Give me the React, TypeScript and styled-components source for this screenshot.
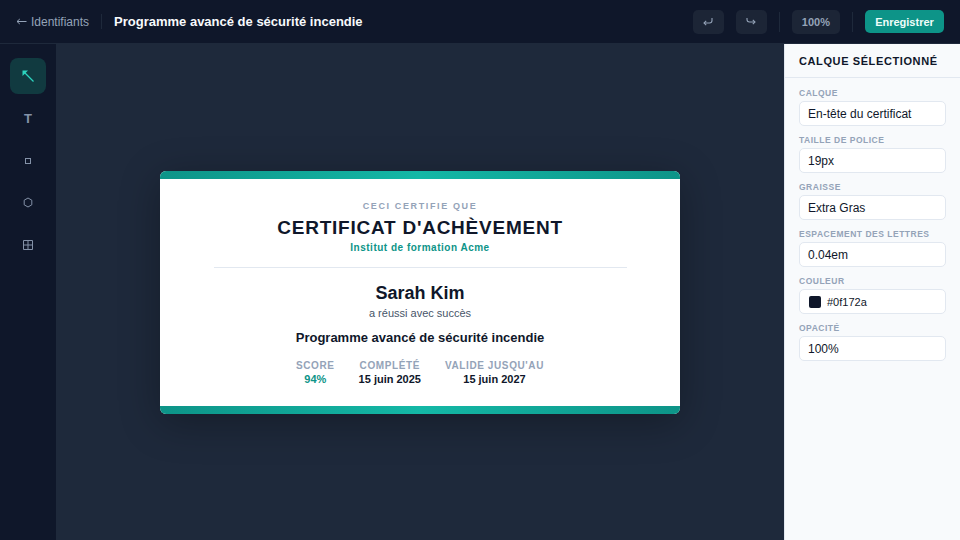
import styled, { createGlobalStyle } from 'styled-components'

const GlobalStyle = createGlobalStyle`
  html, body {
    margin: 0;
    padding: 0;
    background: #1e293b;
  }
  * {
    box-sizing: border-box;
  }
`

const Page = styled.div`
  width: 960px;
  height: 540px;
  display: flex;
  flex-direction: column;
  overflow: hidden;
  font-family: 'Liberation Sans', Arial, sans-serif;
  background: #1e293b;
`

const TopBar = styled.header`
  height: 44px;
  flex-shrink: 0;
  display: flex;
  align-items: center;
  padding: 0 16px;
  background: #0f172a;
  border-bottom: 1px solid #1e293b;
`

const BackLink = styled.a`
  display: flex;
  align-items: center;
  gap: 4px;
  color: #94a3b8;
  font-size: 12px;
  white-space: nowrap;
`

const Divider = styled.div`
  width: 1px;
  height: 15px;
  margin: 0 12px;
  background: #1e293b;
`

const DocTitle = styled.div`
  flex: 1;
  color: #f8fafc;
  font-size: 13px;
  font-weight: 700;
`

const Actions = styled.div`
  display: flex;
  align-items: center;
  gap: 12px;
`

const GhostButton = styled.button`
  height: 24px;
  min-width: 31px;
  padding: 0 10px;
  display: flex;
  align-items: center;
  justify-content: center;
  border: none;
  border-radius: 5px;
  background: #1c2536;
  color: #94a3b8;
  font-family: inherit;
  font-size: 11px;
  font-weight: 700;
`

const ActionDivider = styled.div`
  width: 1px;
  height: 20px;
  background: #1e293b;
`

const SaveButton = styled.button`
  height: 23px;
  width: 79px;
  padding: 0;
  border: none;
  border-radius: 5px;
  background: #0d9488;
  color: #f0fdfa;
  font-family: inherit;
  font-size: 11px;
  font-weight: 700;
`

const Body = styled.div`
  flex: 1;
  display: flex;
  min-height: 0;
`

const ToolRail = styled.nav`
  width: 56px;
  flex-shrink: 0;
  display: flex;
  flex-direction: column;
  align-items: center;
  gap: 6px;
  padding-top: 14px;
  background: #0f172a;
`

const ToolButton = styled.button<{ $active?: boolean }>`
  width: 36px;
  height: 36px;
  display: flex;
  align-items: center;
  justify-content: center;
  padding: 0;
  border: none;
  border-radius: 8px;
  background: ${({ $active }) => ($active ? '#113a40' : 'transparent')};
  color: ${({ $active }) => ($active ? '#2dd4bf' : '#8492a8')};
  font-family: inherit;
  font-size: 13px;
  font-weight: 700;
`

const Canvas = styled.main`
  flex: 1;
  display: flex;
  align-items: center;
  justify-content: center;
  background: #1e293b;
`

const Certificate = styled.div`
  width: 520px;
  height: 243px;
  margin-top: 1px;
  display: flex;
  flex-direction: column;
  border-radius: 6px;
  overflow: hidden;
  background: #ffffff;
  box-shadow: 0 8px 40px rgba(0, 0, 0, 0.3);
`

const Band = styled.div`
  height: 8px;
  flex-shrink: 0;
  background: linear-gradient(90deg, #0d9488, #14b8a6, #0d9488);
`

const CertBody = styled.div`
  flex: 1;
  display: flex;
  flex-direction: column;
  align-items: center;
  padding-top: 22px;
  text-align: center;
`

const Eyebrow = styled.div`
  color: #94a3b8;
  font-size: 9px;
  font-weight: 700;
  line-height: 11px;
  letter-spacing: 0.18em;
`

const CertTitle = styled.h1`
  margin: 4px 0 0;
  color: #0f172a;
  font-size: 19px;
  font-weight: 700;
  line-height: 24px;
  letter-spacing: 0.04em;
`

const Issuer = styled.div`
  margin-top: 2px;
  color: #0d9488;
  font-size: 10px;
  font-weight: 700;
  line-height: 12px;
  letter-spacing: 0.05em;
`

const Rule = styled.div`
  width: 413px;
  height: 1px;
  margin-top: 13px;
  background: #e2e8f0;
`

const Recipient = styled.div`
  margin-top: 14px;
  color: #0f172a;
  font-size: 18px;
  font-weight: 700;
  line-height: 22px;
`

const Achieved = styled.div`
  margin-top: 3px;
  color: #475569;
  font-size: 11px;
  line-height: 13px;
`

const CourseName = styled.div`
  margin-top: 10px;
  color: #0f172a;
  font-size: 13px;
  font-weight: 700;
  line-height: 16px;
`

const Stats = styled.div`
  display: flex;
  gap: 24px;
  margin-top: 14px;
`

const Stat = styled.div`
  display: flex;
  flex-direction: column;
  align-items: center;
  gap: 1px;
`

const StatLabel = styled.div`
  color: #94a3b8;
  font-size: 10px;
  font-weight: 700;
  line-height: 12px;
  letter-spacing: 0.06em;
`

const StatValue = styled.div<{ $accent?: boolean }>`
  color: ${({ $accent }) => ($accent ? '#0d9488' : '#0f172a')};
  font-size: 11px;
  font-weight: 700;
  line-height: 13px;
`

const SidePanel = styled.aside`
  width: 176px;
  flex-shrink: 0;
  background: #f8fafc;
  border-left: 1px solid #e2e8f0;
`

const PanelTitle = styled.div`
  height: 34px;
  display: flex;
  align-items: center;
  padding: 0 14px;
  border-bottom: 1px solid #e2e8f0;
  color: #0f172a;
  font-size: 11px;
  font-weight: 700;
  letter-spacing: 0.055em;
`

const Fields = styled.div`
  display: flex;
  flex-direction: column;
  gap: 9px;
  padding: 10px 14px;
`

const Field = styled.div`
  display: flex;
  flex-direction: column;
  gap: 3px;
`

const FieldLabel = styled.div`
  color: #94a3b8;
  font-size: 8.5px;
  font-weight: 700;
  line-height: 10px;
  letter-spacing: 0.06em;
  white-space: nowrap;
`

const FieldValue = styled.div`
  height: 25px;
  display: flex;
  align-items: center;
  gap: 6px;
  padding: 0 8px;
  border: 1px solid #e2e8f0;
  border-radius: 5px;
  background: #ffffff;
  color: #0f172a;
  font-size: 12px;
`

const Swatch = styled.span`
  width: 12px;
  height: 12px;
  margin-left: 1px;
  border-radius: 2px;
  background: #0f172a;
`

const ColorText = styled.span`
  font-size: 11px;
`

const BackArrow = () => (
  <svg width="11" height="9" viewBox="0 0 11 9" fill="none" stroke="currentColor">
    <path d="M1 4.5H10.5" />
    <path d="M3.8 2 1 4.5 3.8 7" />
  </svg>
)

const UndoIcon = () => (
  <svg width="10" height="9" viewBox="0 0 10 9" fill="none" stroke="currentColor" strokeWidth="1.1">
    <path d="M9 1V3.5Q9 6 6.5 6H1" />
    <path d="M3.2 3.8 1 6 3.2 8.2" />
  </svg>
)

const RedoIcon = () => (
  <svg width="10" height="9" viewBox="0 0 10 9" fill="none" stroke="currentColor" strokeWidth="1.1">
    <path d="M1 1V2.5Q1 5 3.5 5H9" />
    <path d="M6.8 2.8 9 5 6.8 7.2" />
  </svg>
)

const SelectIcon = () => (
  <svg width="14" height="14" viewBox="0 0 14 14" fill="none" stroke="currentColor">
    <path d="M2.5 2.5 12.5 12.5" strokeWidth="1.2" />
    <path d="M1.5 1.5H7L1.5 7Z" fill="currentColor" stroke="none" />
  </svg>
)

const RectIcon = () => (
  <svg width="14" height="14" viewBox="0 0 14 14" fill="none" stroke="currentColor">
    <rect x="4.5" y="5.5" width="5" height="5" />
  </svg>
)

const HexIcon = () => (
  <svg width="14" height="14" viewBox="0 0 14 14" fill="none" stroke="currentColor">
    <path d="M7 3 10.8 5.2V9.8L7 12 3.2 9.8V5.2Z" />
  </svg>
)

const GridIcon = () => (
  <svg width="14" height="14" viewBox="0 0 14 14" fill="none" stroke="currentColor">
    <path d="M2.5 3.5H11.5V12.5H2.5ZM7 3.5V12.5M2.5 8H11.5" />
  </svg>
)

const fields = [
  { label: 'CALQUE', value: 'En-tête du certificat' },
  { label: 'TAILLE DE POLICE', value: '19px' },
  { label: 'GRAISSE', value: 'Extra Gras' },
  { label: 'ESPACEMENT DES LETTRES', value: '0.04em' },
]

export default function App() {
  return (
    <>
      <GlobalStyle />
      <Page>
        <TopBar>
          <BackLink>
            <BackArrow />
            Identifiants
          </BackLink>
          <Divider />
          <DocTitle>Programme avancé de sécurité incendie</DocTitle>
          <Actions>
            <GhostButton aria-label="Annuler">
              <UndoIcon />
            </GhostButton>
            <GhostButton aria-label="Rétablir">
              <RedoIcon />
            </GhostButton>
            <ActionDivider />
            <GhostButton>100%</GhostButton>
            <ActionDivider />
            <SaveButton>Enregistrer</SaveButton>
          </Actions>
        </TopBar>
        <Body>
          <ToolRail>
            <ToolButton $active>
              <SelectIcon />
            </ToolButton>
            <ToolButton>T</ToolButton>
            <ToolButton>
              <RectIcon />
            </ToolButton>
            <ToolButton>
              <HexIcon />
            </ToolButton>
            <ToolButton>
              <GridIcon />
            </ToolButton>
          </ToolRail>
          <Canvas>
            <Certificate>
              <Band />
              <CertBody>
                <Eyebrow>CECI CERTIFIE QUE</Eyebrow>
                <CertTitle>CERTIFICAT D'ACHÈVEMENT</CertTitle>
                <Issuer>Institut de formation Acme</Issuer>
                <Rule />
                <Recipient>Sarah Kim</Recipient>
                <Achieved>a réussi avec succès</Achieved>
                <CourseName>Programme avancé de sécurité incendie</CourseName>
                <Stats>
                  <Stat>
                    <StatLabel>SCORE</StatLabel>
                    <StatValue $accent>94%</StatValue>
                  </Stat>
                  <Stat>
                    <StatLabel>COMPLÉTÉ</StatLabel>
                    <StatValue>15 juin 2025</StatValue>
                  </Stat>
                  <Stat>
                    <StatLabel>VALIDE JUSQU'AU</StatLabel>
                    <StatValue>15 juin 2027</StatValue>
                  </Stat>
                </Stats>
              </CertBody>
              <Band />
            </Certificate>
          </Canvas>
          <SidePanel>
            <PanelTitle>CALQUE SÉLECTIONNÉ</PanelTitle>
            <Fields>
              {fields.map((f) => (
                <Field key={f.label}>
                  <FieldLabel>{f.label}</FieldLabel>
                  <FieldValue>{f.value}</FieldValue>
                </Field>
              ))}
              <Field>
                <FieldLabel>COULEUR</FieldLabel>
                <FieldValue>
                  <Swatch />
                  <ColorText>#0f172a</ColorText>
                </FieldValue>
              </Field>
              <Field>
                <FieldLabel>OPACITÉ</FieldLabel>
                <FieldValue>100%</FieldValue>
              </Field>
            </Fields>
          </SidePanel>
        </Body>
      </Page>
    </>
  )
}
